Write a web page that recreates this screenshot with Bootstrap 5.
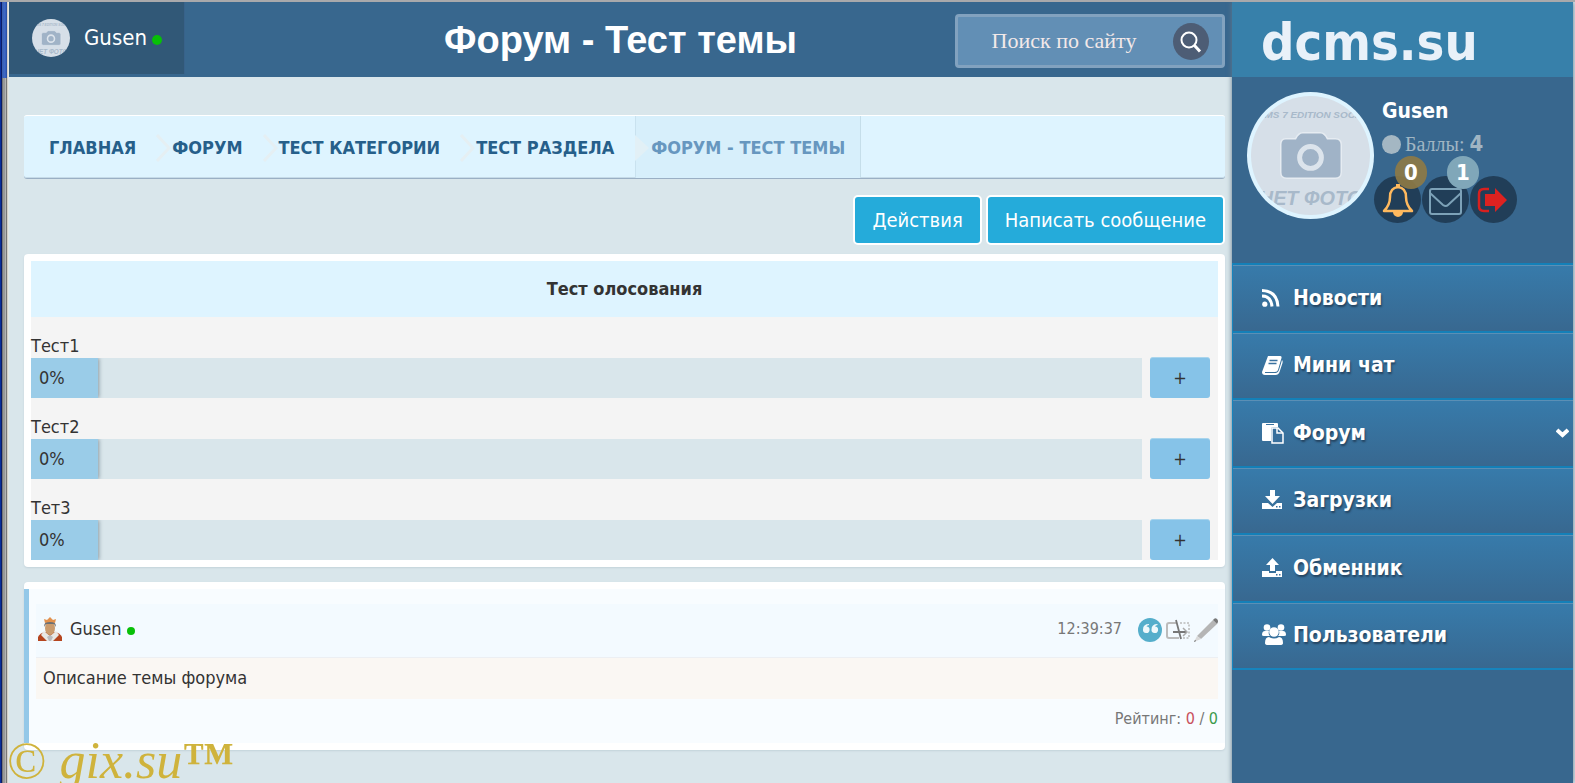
<!DOCTYPE html>
<html lang="ru">
<head>
<meta charset="utf-8">
<meta name="viewport" content="width=device-width, initial-scale=1">
<title>Форум - Тест темы</title>
<link href="https://cdn.jsdelivr.net/npm/bootstrap@5.3.0/dist/css/bootstrap.min.css" rel="stylesheet">
<style>
body{font-family:"DejaVu Sans Condensed","DejaVu Sans",sans-serif;font-size:18px;line-height:24px;color:#333;background:#d9e6eb;border-top:2px solid #a9a9ab}
a{color:inherit;text-decoration:none}
.frame-edge{width:9px;flex:none;background:linear-gradient(90deg,#0a2f9c 0 1px,#0b1c66 1px 2px,#777 2px 3px,#999 3px 5px,#b4b4b4 5px 6px,#777 6px 7px,#d4d0c8 7px 8px,#e2e6e6 8px 9px)}
.frame-edge::before{content:"";display:block;height:76px;margin:0 2px;background:linear-gradient(90deg,#3a5fae,#3d68c8 60%,#2348a0)}
.topbar{height:75px;background:#38678e;display:grid;grid-template-columns:1fr auto 1fr}
.user-tab{width:176px;height:72px;background:#315877;color:#fff;font-size:22px;border-right:1px solid #38628a;padding-left:23px;gap:14px}
.online{display:inline-block;width:10px;height:10px;border-radius:50%;background:#08c008;margin-left:5px}
.online-sm{width:8px;height:8px}
.page-title{font:bold 38px/46px "Liberation Sans",Arial,sans-serif;color:#fff}
.search-box{width:270px;height:54px;border:3px solid #82a2bf;border-radius:4px;background:#628fb5;padding:0 13px 0 16px;margin:12px 7px 0 0}
.search-box input{background:none;border:0;outline:0;width:180px;min-width:0;text-align:center;font:22px/28px "Liberation Serif",serif;color:#f3e9e9}
.search-box input::placeholder{color:#f3e9e9;opacity:1}
.search-box button{width:36px;height:37px;border:0;border-radius:50%;background:#4d5d75;padding:0;flex:none}
.content-col{padding:38px 7px 0 15px}
.crumbs{height:64px;background:#def4ff;border-top:1px solid #fff;border-bottom:1px solid #9aafc4;border-radius:3px;font-weight:bold;font-size:18px;color:#265f8a;box-shadow:inset 0 -1px #c6dbe8}
.crumbs li{display:flex;align-items:center;padding-left:15px;padding-top:2px}
.crumbs li:first-child{padding-left:25px}
.crumbs .now{color:#6797bf;background:#d7effb;border-left:1px solid #c9e2ef;border-right:1px solid #c5deea;padding-right:15px}
.crumbs svg{margin:0 -15px 0 20px;flex:none;position:relative;z-index:1}
.act{font-size:20px;line-height:26px;color:#fff;background:#25abda;border:2px solid #fff;border-radius:5px;padding:10px 17px;height:50px}
.panel{background:#fff;border-radius:4px;box-shadow:0 1px 2px #c3d2d9}
.panel-poll{padding:7px;margin-top:9px}
.panel-post{padding:7px 0;margin-top:15px}
.poll{background:#f4f4f4}
.poll-head{background:#def4ff;height:56px;line-height:56px;font-weight:bold;text-align:center}
.poll-row{padding-top:17px}
.poll-row label{display:block;height:24px}
.poll-row .track{height:40px;background:#d9e6eb;flex:1;overflow:hidden}
.poll-row .fill{height:40px;line-height:40px;padding-left:8px;background:#9acce8;box-shadow:1px 0 4px #8899a2;min-width:67px}
.vote{width:60px;height:41px;margin:-1px 8px 0;border:0;border-top:1px solid #a9d5ed;border-radius:3px;background:#86c3e8;padding:0;color:#333;font-size:18px}
.post{border-left:5px solid #93c8e8;background:#f8fcff;height:154px;padding:15px 7px 0}
.post-head{height:54px;background:#f3faff;border-bottom:1px solid #eceff3;padding:0 0 3px 2px}
.post-body{height:41px;background:#faf7f3;padding:8px 7px}
.small-note{font-size:16px;color:#777}
.rate-minus{color:#c8505c}
.rate-plus{color:#3c9a4c}
.sidebar{width:341px;flex:none;background:#38678e;margin-right:2px;box-shadow:0 0 5px #61798b;min-height:781px;position:relative}
.brand{height:75px;background:#3780aa;color:#e9f1f9;font-weight:bold;font-size:52px;line-height:80px;padding-left:29px}
.profile{height:186px;padding:15px 0 0 15px}
.prof-name{font-weight:bold;font-size:21px;color:#fff;line-height:26px;padding-top:6px}
.points{font:20px/26px "Liberation Serif",serif;color:#a0b5c3;margin-top:7px}
.points b{font:bold 22px/26px "DejaVu Sans Condensed","DejaVu Sans",sans-serif}
.dot{width:19px;height:19px;border-radius:50%;background:#a4b7c3;margin-right:4px}
.round{width:47px;height:47px;border-radius:50%;background:#213e58;position:relative;display:block}
.rounds{gap:1px;margin-top:19px}
.count{position:absolute;left:21px;top:-20px;width:32px;height:33px;border-radius:16px;color:#fff;font-weight:bold;font-size:22px;line-height:33px;text-align:center}
.count-bell{background:#8f7a45e6}
.count-mail{background:#80a7b9;left:25px}
.menu{display:grid;grid-template-rows:repeat(6,1fr);height:407px;border-left:1px solid #1684bd;border-bottom:2px solid #1684bd}
.menu a{display:flex;align-items:center;color:#fff;font-weight:bold;font-size:21px;padding-left:29px;border-top:2px solid #1480b8;background:linear-gradient(#377bab,#386890);box-shadow:inset 0 1px #5b8fb5;text-shadow:1px 2px 2px #24435f}
.menu a svg{width:31px;height:24px;flex:none}
.menu a .chev{width:13px;height:10px;margin-left:auto;margin-right:4px}
.wm{position:fixed;left:7px;bottom:-8px;color:#cfb33c;font:italic 52px/60px "Liberation Serif",serif;pointer-events:none;white-space:pre}
.wm span{font-style:normal}
.wm .tm{font-weight:bold}
</style>
</head>
<body>
<svg width="0" height="0" class="position-absolute" aria-hidden="true">
<defs>
<clipPath id="round"><circle cx="60" cy="60" r="60"/></clipPath>
<symbol id="nophoto" viewBox="0 0 120 120">
<g clip-path="url(#round)"><rect width="120" height="120" fill="#d6dfe8"/>
<path fill="#a0b3c7" stroke="#e6ecf2" stroke-width="1.5" d="M35 43h10q3-6 7-6h18q4 0 7 6h8q6 0 6 6v28q0 6-6 6H36q-6 0-6-6V49q0-6 5-6z"/>
<circle cx="60" cy="62" r="11" fill="none" stroke="#dce4ec" stroke-width="5"/>
<g font-family="Liberation Sans" font-style="italic" font-weight="bold" fill="#a8b9ca" text-anchor="middle"><text x="60" y="22" font-size="10">DCMS 7 EDITION SOCIAL</text><text x="60" y="110" font-size="20">НЕТ ФОТО</text></g></g>
</symbol>
</defs>
</svg>
<div class="d-flex">
<div class="frame-edge"></div>
<main class="flex-grow-1">
<header class="topbar">
<a href="#" class="user-tab d-flex align-items-center"><svg width="38" height="38"><use href="#nophoto"/></svg><span>Gusen<i class="online"></i></span></a>
<h1 class="page-title m-0 align-self-center">Форум - Тест темы</h1>
<form class="search-box d-flex align-items-center justify-content-between justify-self-end ms-auto"><input type="text" placeholder="Поиск по сайту" aria-label="Поиск по сайту"><button type="button" aria-label="Найти"><svg width="36" height="37" viewBox="0 0 36 37" fill="none" stroke="#fff"><circle cx="16" cy="17" r="7.5" stroke-width="2"/><path d="M21.500 22.500l5.500 6" stroke-width="3"/></svg></button></form>
</header>
<div class="content-col">
<nav aria-label="breadcrumb"><ol class="crumbs d-flex list-unstyled m-0">
<li><a href="#">ГЛАВНАЯ</a><svg width="16" height="30"><path d="M1 2l12 13L1 28" fill="none" stroke="#e5eff3" stroke-width="3"/></svg></li>
<li><a href="#">ФОРУМ</a><svg width="16" height="30"><path d="M1 2l12 13L1 28" fill="none" stroke="#e5eff3" stroke-width="3"/></svg></li>
<li><a href="#">ТЕСТ КАТЕГОРИИ</a><svg width="16" height="30"><path d="M1 2l12 13L1 28" fill="none" stroke="#e5eff3" stroke-width="3"/></svg></li>
<li><a href="#">ТЕСТ РАЗДЕЛА</a><svg width="16" height="30"><path d="M1 2l14 13L1 28" fill="#e2f0f6"/></svg></li>
<li class="now">ФОРУМ - ТЕСТ ТЕМЫ</li>
</ol></nav>
<div class="d-flex justify-content-end gap-1 mt-3"><button class="act">Действия</button><button class="act">Написать сообщение</button></div>
<section class="panel panel-poll">
<div class="poll"><div class="poll-head">Тест олосования</div>
<div class="poll-row"><label for="v1">Тест1</label><div class="d-flex"><div class="track"><div class="fill" style="width:0%">0%</div></div><button class="vote" id="v1">+</button></div></div>
<div class="poll-row"><label for="v2">Тест2</label><div class="d-flex"><div class="track"><div class="fill" style="width:0%">0%</div></div><button class="vote" id="v2">+</button></div></div>
<div class="poll-row"><label for="v3">Тет3</label><div class="d-flex"><div class="track"><div class="fill" style="width:0%">0%</div></div><button class="vote" id="v3">+</button></div></div>
</div></section>
<section class="panel panel-post"><article class="post">
<div class="post-head d-flex align-items-center">
<svg width="24" height="24" viewBox="0 0 24 24"><path d="M0 24v-4q2-4 7-5h10q5 1 7 5v4z" fill="#b5451f"/><path d="M6 14l6 5 6-5 3 4-6 6H9l-6-6z" fill="#e8e8e6"/><path d="M9 20l3-2 3 2-2 4h-2z" fill="#b9bcc0"/><ellipse cx="12" cy="11" rx="5" ry="7" fill="#c99b6e"/><path d="M6 10q0-6 6-6t6 6l-2-3H8z" fill="#6c7074"/><path d="M7 6L6 2l3 1 3-3 3 3 3-1-1 4q-5-2-10 0z" fill="#e2914d"/></svg>
<a href="#" class="ms-2">Gusen<i class="online online-sm"></i></a>
<time class="small-note ms-auto">12:39:37</time>
<a href="#" class="ms-3" aria-label="Цитировать"><svg width="24" height="24" viewBox="0 0 24 24"><circle cx="12" cy="12" r="12" fill="#55aecb"/><path fill="#eef8fb" d="M11 6q-6 0-6 5.500a3.300 3.300 0 1 0 3.500-3q.5-1.300 2.500-1.500zM19.500 6q-6 0-6 5.500a3.300 3.300 0 1 0 3.500-3q.5-1.300 2.500-1.500z"/></svg></a>
<a href="#" class="ms-1" aria-label="Перенести"><svg width="24" height="24" viewBox="0 0 24 24" fill="none"><path d="M10 5H3q-2 0-2 2v11q0 2 2 2h10" stroke="#bbb" stroke-width="2"/><path d="M14 5h9v15h-8" stroke="#bbb" stroke-width="1.500" stroke-dasharray="2 1.500"/><path d="M10 2l5 19M7 14h13" stroke="#777" stroke-width="1.800"/><path d="M17 10l4 4-4 4" stroke="#aaa" stroke-width="1.500"/></svg></a>
<a href="#" class="ms-1" aria-label="Править"><svg width="24" height="24" viewBox="0 0 24 24"><path d="M3 18L19 2l4 4L7 21z" fill="#b5b5b5"/><path d="M19 2q2-3 4-1t0 5z" fill="#777"/><path d="M3 18l4 3-7 3z" fill="#d9d9d9"/><path d="M1 22l1 1-2 1z" fill="#555"/></svg></a>
</div>
<div class="post-body">Описание темы форума</div>
<div class="small-note text-end pt-2">Рейтинг: <span class="rate-minus">0</span> / <span class="rate-plus">0</span></div>
</article></section>
</div>
</main>
<aside class="sidebar">
<a href="#" class="brand d-block">dcms.su</a>
<div class="profile d-flex">
<svg width="127" height="127" viewBox="0 0 127 127" class="flex-shrink-0"><circle cx="63.500" cy="63.500" r="63.500" fill="#def4ff"/><svg x="4" y="4" width="119" height="119"><use href="#nophoto"/></svg></svg>
<div class="flex-grow-1">
<div class="ps-2"><div class="prof-name">Gusen</div><div class="points d-flex align-items-center"><i class="dot"></i><span>Баллы: <b>4</b></span></div></div>
<div class="d-flex rounds">
<a href="#" class="round" aria-label="Уведомления"><svg width="47" height="47" viewBox="0 0 47 47"><path d="M10 35q6-6 6-14 0-9 8-10 8 1 8 10 0 8 6 14z" fill="none" stroke="#ffb95e" stroke-width="2.500" stroke-linejoin="round"/><path d="M22 8h4v4h-4zM19 36h10a5 5 0 0 1-10 0z" fill="#ffb95e"/></svg><span class="count count-bell">0</span></a>
<a href="#" class="round" aria-label="Почта"><svg width="47" height="47" viewBox="0 0 47 47" fill="none" stroke="#7da2b8" stroke-width="2"><rect x="8" y="13" width="31" height="25" rx="2"/><path d="M8 17l13 12q3 2 5 0l13-12"/></svg><span class="count count-mail">1</span></a>
<a href="#" class="round" aria-label="Выход"><svg width="47" height="47" viewBox="0 0 47 47"><path d="M19 13h-5q-5 0-5 5v12q0 5 5 5h5" fill="none" stroke="#d8201f" stroke-width="2.500"/><path d="M15 18h10v-6l12 12-12 12v-6H15z" fill="#dd2220"/></svg></a>
</div></div></div>
<nav class="menu">
<a href="#"><svg viewBox="0 0 31 24" fill="none" stroke="#fff" stroke-width="3"><circle cx="2.800" cy="18.200" r="2.600" fill="#fff" stroke="none"/><path d="M0 10q9 0 10 10.500M0 4.500Q15 5 16 20.500"/></svg>Новости</a>
<a href="#"><svg viewBox="0 0 31 24"><path fill="#fff" d="M6 3h12q2 0 1.500 2L16 17q-.5 2-3 2H3v1h11q2 0 3-3l3-10q1 1 .5 3l-3 9q-1 3-4 3H3q-3 0-3-3z"/><path stroke="#38719f" stroke-width="1.300" d="M7.500 7.500h8M6.500 10.500h8"/></svg>Мини чат</a>
<a href="#"><svg viewBox="0 0 31 24"><path fill="#fff" d="M1 2h14q1 0 1 1v3h-5q-2 0-2 2v12H1q-1 0-1-1V3q0-1 1-1z"/><path stroke="#38719f" d="M4 3.500h8"/><path d="M10 7h6l5 5v10H10z" fill="#386f9c" stroke="#fff" stroke-width="1.500"/><path d="M15 7v5h6" fill="none" stroke="#fff" stroke-width="1.500"/></svg>Форум<svg class="chev" viewBox="0 0 13 10"><path d="M1 2l5.500 5L12 2" fill="none" stroke="#fff" stroke-width="4"/></svg></a>
<a href="#"><svg viewBox="0 0 31 24"><path fill="#fff" d="M8 2h5v6h5l-7.500 8L3 8h5zM0 15h6l4.500 4L15 15h5v6H0z"/><path fill="#38719f" d="M14 18h1.500v1.500H14zM17 18h1.500v1.500H17z"/></svg>Загрузки</a>
<a href="#"><svg viewBox="0 0 31 24"><path fill="#fff" d="M8 15h5V9h4l-6.500-7L4 9h4zM0 15h7v2h7v-2h6v6H0z"/><path fill="#38719f" d="M14 18h1.500v1.500H14zM17 18h1.500v1.500H17z"/></svg>Обменник</a>
<a href="#"><svg viewBox="0 0 31 24" fill="#fff"><circle cx="5" cy="4.500" r="3.300"/><circle cx="19" cy="4.500" r="3.300"/><path d="M0 12q0-4 3-4h4q-1 3 1 5H2q-2 0-2-1zM24 12q0-4-3-4h-4q1 3-1 5h6q2 0 2-1z"/><circle cx="12" cy="9" r="4.800"/><path d="M3 20q0-6 4-6 5 3 10 0 4 0 4 6 0 2-3 2H6q-3 0-3-2z"/></svg>Пользователи</a>
</nav>
</aside>
</div>
<div class="wm" aria-hidden="true"><span>©</span> gix.su<span class="tm">™</span></div>
<script src="https://cdn.jsdelivr.net/npm/bootstrap@5.3.0/dist/js/bootstrap.bundle.min.js"></script>
</body>
</html>
